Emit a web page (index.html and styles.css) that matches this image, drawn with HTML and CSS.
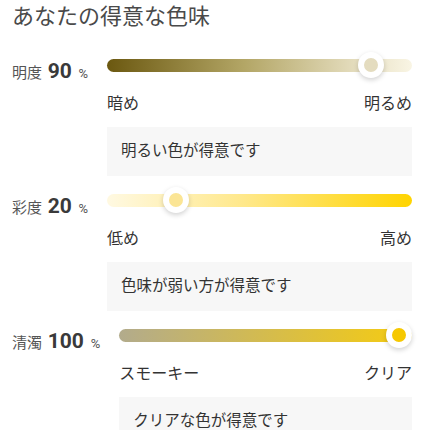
FILE: index.html
```html
<!DOCTYPE html>
<html>
<head>
    <title>あなたの得意な色味</title>
    <link rel="stylesheet" href="styles.css">
</head>
<body>
    <h1 class="title">あなたの得意な色味</h1>

    <div class="trait">
        <div class="trait-label">明度 <b>90</b> <small>%</small></div>
        <div class="trait-body">
            <div class="slider">
                <div class="track track-brightness"></div>
                <span class="thumb thumb-brightness" style="left: calc(13px + (100% - 26px) * 0.9);"></span>
            </div>
            <div class="ends"><span>暗め</span><span>明るめ</span></div>
            <div class="note">明るい色が得意です</div>
        </div>
    </div>

    <div class="trait">
        <div class="trait-label">彩度 <b>20</b> <small>%</small></div>
        <div class="trait-body">
            <div class="slider">
                <div class="track track-saturation"></div>
                <span class="thumb thumb-saturation" style="left: calc(13px + (100% - 26px) * 0.2);"></span>
            </div>
            <div class="ends"><span>低め</span><span>高め</span></div>
            <div class="note">色味が弱い方が得意です</div>
        </div>
    </div>

    <div class="trait">
        <div class="trait-label">清濁 <b>100</b> <small>%</small></div>
        <div class="trait-body">
            <div class="slider">
                <div class="track track-clarity"></div>
                <span class="thumb thumb-clarity" style="left: calc(13px + (100% - 26px) * 1);"></span>
            </div>
            <div class="ends"><span>スモーキー</span><span>クリア</span></div>
            <div class="note">クリアな色が得意です</div>
        </div>
    </div>
</body>
</html>
```

FILE: styles.css
```css
body {
    font-family: Roboto, "Noto Sans CJK JP", sans-serif;
    margin: 0;
    padding: 0 18px 0 12px;
    background: #fff;
    color: #333;
}

.title {
    font-size: 22px;
    font-weight: 400;
    color: #4a4a4a;
    margin: 0;
    line-height: 34px;
    margin-bottom: 18px;
}

.trait {
    display: flex;
    gap: 19px;
    margin-bottom: 11px;
}

.trait-label {
    white-space: nowrap;
    font-size: 15px;
    color: #555;
    line-height: 26px;
    margin-top: 6px;
}

.trait-label b {
    font-size: 21px;
    font-weight: 700;
    color: #3a3a3a;
    margin: 0 3px 0 2px;
}

.trait-label small {
    font-size: 13px;
}

.trait-body {
    flex-grow: 1;
}

.slider {
    position: relative;
    height: 26px;
    display: flex;
    align-items: center;
}

.track {
    width: 100%;
    height: 13px;
    border-radius: 7px;
}

.track-brightness {
    background: linear-gradient(to right, #6b5810, #b3a666 45%, #e9e2c6 85%, #f9f5e4);
}

.track-saturation {
    background: linear-gradient(to right, #fff9e2, #ffe88a 45%, #ffd400);
}

.track-clarity {
    background: linear-gradient(to right, #b2ab8c, #f6cc10);
}

.thumb {
    position: absolute;
    top: 0;
    width: 14px;
    height: 14px;
    margin-left: -13px;
    border: 6px solid #fff;
    border-radius: 50%;
    box-shadow: 0 2px 5px rgba(0, 0, 0, 0.18);
}

.thumb-brightness {
    background: #e4dcbf;
}

.thumb-saturation {
    background: #fbe595;
}

.thumb-clarity {
    background: #f6c800;
}

.ends {
    display: flex;
    justify-content: space-between;
    font-size: 16px;
    line-height: 24px;
    margin-top: 14px;
    color: #333;
}

.note {
    background: #f7f7f7;
    margin-top: 11px;
    padding: 12px 14px;
    font-size: 15.5px;
    line-height: 25px;
    color: #333;
}
```
